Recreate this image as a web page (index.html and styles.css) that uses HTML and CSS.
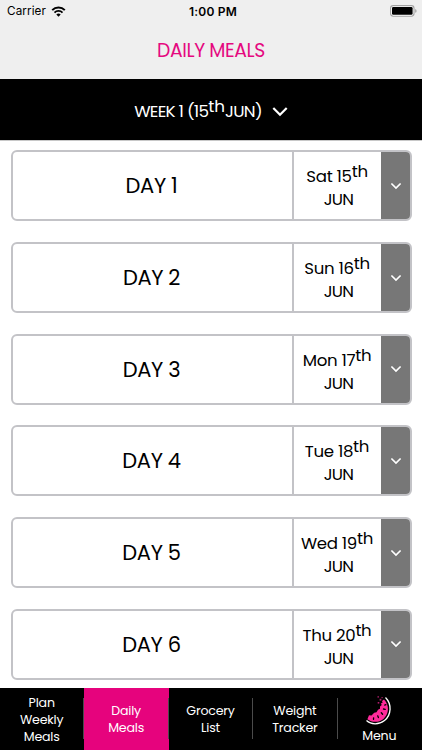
FILE: index.html
```html
<!DOCTYPE html>
<html lang="en">
  <head>
    <meta charset="utf-8" />
    <meta name="viewport" content="width=device-width, initial-scale=1" />
    <title>Daily Meals</title>
    <link rel="stylesheet" href="styles.css">
  </head>
  <body>
    <div class="app">
      <header class="top">
        <div class="status">
          <div class="carrier">
            <span>Carrier</span>
            <svg width="15" height="11" viewBox="0 0 14 11">
              <path d="M0.7 4.1 A8.8 8.8 0 0 1 13.3 4.1" fill="none" stroke="#000" stroke-width="2" />
              <path d="M3 6.6 A5.6 5.6 0 0 1 11 6.6" fill="none" stroke="#000" stroke-width="1.8" />
              <path d="M4.8 8.5 A3.2 3.2 0 0 1 9.2 8.5 L7 10.8 Z" fill="#000" />
            </svg>
          </div>
          <div class="time">1:00 PM</div>
          <svg class="battery" width="27" height="12" viewBox="0 0 27 12">
            <rect x="0.6" y="0.6" width="23.4" height="10.6" rx="2.6" fill="#fff" stroke="#a2a2a2" stroke-width="1.1" />
            <rect x="2" y="2" width="20.6" height="7.8" rx="1.2" fill="#000" />
            <path d="M25.2 4 A2 2 0 0 1 25.2 7.8 Z" fill="#a2a2a2" />
          </svg>
        </div>
        <h1>DAILY MEALS</h1>
      </header>

      <div class="week">
        <span>WEEK 1 (15<sup>th</sup>JUN)</span>
        <svg width="16" height="11" viewBox="0 0 16 11">
          <path d="M1.3 2 L8 8.7 L14.7 2" fill="none" stroke="#fff" stroke-width="2.2" />
        </svg>
      </div>

      <main class="days">
        <div class="day">
          <div class="name">DAY 1</div>
          <div class="date"><span>Sat 15<sup>th</sup></span><span class="month">JUN</span></div>
          <div class="open"><svg width="12" height="8" viewBox="0 0 12 8"><path d="M1.4 1.5 L6 6 L10.6 1.5" /></svg></div>
        </div>
        <div class="day">
          <div class="name">DAY 2</div>
          <div class="date"><span>Sun 16<sup>th</sup></span><span class="month">JUN</span></div>
          <div class="open"><svg width="12" height="8" viewBox="0 0 12 8"><path d="M1.4 1.5 L6 6 L10.6 1.5" /></svg></div>
        </div>
        <div class="day">
          <div class="name">DAY 3</div>
          <div class="date"><span>Mon 17<sup>th</sup></span><span class="month">JUN</span></div>
          <div class="open"><svg width="12" height="8" viewBox="0 0 12 8"><path d="M1.4 1.5 L6 6 L10.6 1.5" /></svg></div>
        </div>
        <div class="day">
          <div class="name">DAY 4</div>
          <div class="date"><span>Tue 18<sup>th</sup></span><span class="month">JUN</span></div>
          <div class="open"><svg width="12" height="8" viewBox="0 0 12 8"><path d="M1.4 1.5 L6 6 L10.6 1.5" /></svg></div>
        </div>
        <div class="day">
          <div class="name">DAY 5</div>
          <div class="date"><span>Wed 19<sup>th</sup></span><span class="month">JUN</span></div>
          <div class="open"><svg width="12" height="8" viewBox="0 0 12 8"><path d="M1.4 1.5 L6 6 L10.6 1.5" /></svg></div>
        </div>
        <div class="day">
          <div class="name">DAY 6</div>
          <div class="date"><span>Thu 20<sup>th</sup></span><span class="month">JUN</span></div>
          <div class="open"><svg width="12" height="8" viewBox="0 0 12 8"><path d="M1.4 1.5 L6 6 L10.6 1.5" /></svg></div>
        </div>
      </main>

      <nav class="tabs">
        <a class="tab">Plan<br>Weekly<br>Meals</a>
        <a class="tab active">Daily<br>Meals</a>
        <a class="tab">Grocery<br>List</a>
        <a class="tab">Weight<br>Tracker</a>
        <a class="tab menu">
          <svg width="28" height="32" viewBox="0 0 28 32">
            <path d="M20.5 2.5 C27 9 26.5 20 19.5 25.5 C14 30 6 29.8 1.5 25.6" fill="none" stroke="#fff" stroke-width="1.3" />
            <path d="M19 4.6 C24.6 10.5 24.2 19 18.4 23.9 C13.5 27.8 7 27.6 2.4 24.2 L4 20.2 L6.5 20.4 L9.2 17.8 L11.5 17.2 L13 14.8 L15 13.8 L15 11.5 L16.8 10 L15.8 8.6 L17.6 7.8 L17 6 Z" fill="#ff2a9b" />
            <g fill="#ff2a9b" opacity="0.7">
              <rect x="12.5" y="1.2" width="1.4" height="1.4" />
              <rect x="14.6" y="3.8" width="1.8" height="1.8" />
              <rect x="12.7" y="7" width="1.6" height="1.6" />
              <rect x="16.5" y="2" width="1.2" height="1.2" />
            </g>
            <g stroke="#000" stroke-width="1.3" stroke-linecap="round">
              <path d="M19.7 10.1 L20.9 9.7" />
              <path d="M18.5 14 L20.2 14.3" />
              <path d="M16.3 17.8 L17.6 19.2" />
              <path d="M12.7 20.8 L13.4 22.6" />
              <path d="M8.6 22.8 L8.5 24.4" />
            </g>
          </svg>
          <span>Menu</span>
        </a>
      </nav>
    </div>
  </body>
</html>
```

FILE: styles.css
```css
* {
  box-sizing: border-box;
}
body {
  margin: 0;
  background-color: #fff;
  color: #000;
  font-family: Poppins, Inter, "Liberation Sans", sans-serif;
}
svg {
  display: block;
  flex: none;
}
.app {
  width: 422px;
  height: 750px;
  display: flex;
  flex-direction: column;
  overflow: hidden;
}

.top {
  height: 79px;
  background-color: #efefef;
}
.status {
  height: 22px;
  display: grid;
  grid-template-columns: 1fr auto 1fr;
  align-items: center;
  padding: 0 5px 0 7px;
  font-family: Inter, "Liberation Sans", sans-serif;
}
.carrier {
  display: flex;
  align-items: center;
  gap: 5px;
  font-size: 11.7px;
  letter-spacing: 0.1px;
}
.time {
  padding-left: 2px;
  font-size: 12px;
  font-weight: 600;
  letter-spacing: 0.2px;
}
.battery {
  justify-self: end;
}
h1 {
  margin: 17px 0 0;
  color: #e5097f;
  font-size: 18.8px;
  font-weight: 400;
  line-height: 24px;
  letter-spacing: -0.4px;
  text-align: center;
}

.week {
  height: 62px;
  display: flex;
  align-items: center;
  justify-content: center;
  gap: 10px;
  padding-top: 3px;
  background-color: #000;
  border-bottom: 1px solid #c8c8c8;
  color: #fff;
  font-size: 16.8px;
  letter-spacing: -0.75px;
  line-height: 22px;
}
sup {
  font-size: 1em;
  line-height: 0;
  vertical-align: 5.5px;
}
.week sup {
  letter-spacing: 0;
}

.days {
  height: 547px;
  display: flex;
  flex-direction: column;
  gap: 20.7px;
  padding: 9.4px 10.5px 0 11px;
}
.day {
  flex: none;
  height: 71px;
  display: flex;
  border: 2px solid #c3c3c7;
  border-radius: 6px;
  overflow: hidden;
}
.name {
  flex: 1;
  display: flex;
  align-items: center;
  justify-content: center;
  padding-right: 2px;
  font-size: 21px;
  letter-spacing: -0.35px;
}
.date {
  width: 89px;
  display: flex;
  flex-direction: column;
  align-items: center;
  justify-content: center;
  padding: 5px 1px 0 0;
  border-left: 2px solid #c3c3c7;
  font-size: 16.6px;
  letter-spacing: -0.3px;
  line-height: 23px;
  white-space: nowrap;
}
.month {
  padding-left: 3px;
  letter-spacing: -0.7px;
}
.open {
  width: 28.5px;
  display: flex;
  align-items: center;
  justify-content: center;
  padding-left: 2px;
  background-color: #777;
}
.open path {
  fill: none;
  stroke: #fff;
  stroke-width: 1.7;
}

.tabs {
  height: 62px;
  display: grid;
  grid-template-columns: repeat(5, 1fr);
  background-color: #000;
}
.tab {
  position: relative;
  display: flex;
  flex-direction: column;
  align-items: center;
  justify-content: center;
  padding-right: 1px;
  color: #fff;
  font-size: 12.6px;
  letter-spacing: -0.2px;
  line-height: 17px;
  text-align: center;
}
.tab + .tab::before {
  content: "";
  position: absolute;
  left: -1px;
  top: 10px;
  width: 1px;
  height: 41px;
  background-color: #4b4b4b;
}
.active {
  background-color: #e6037d;
}
.menu {
  justify-content: flex-start;
  padding-top: 7px;
}
```
